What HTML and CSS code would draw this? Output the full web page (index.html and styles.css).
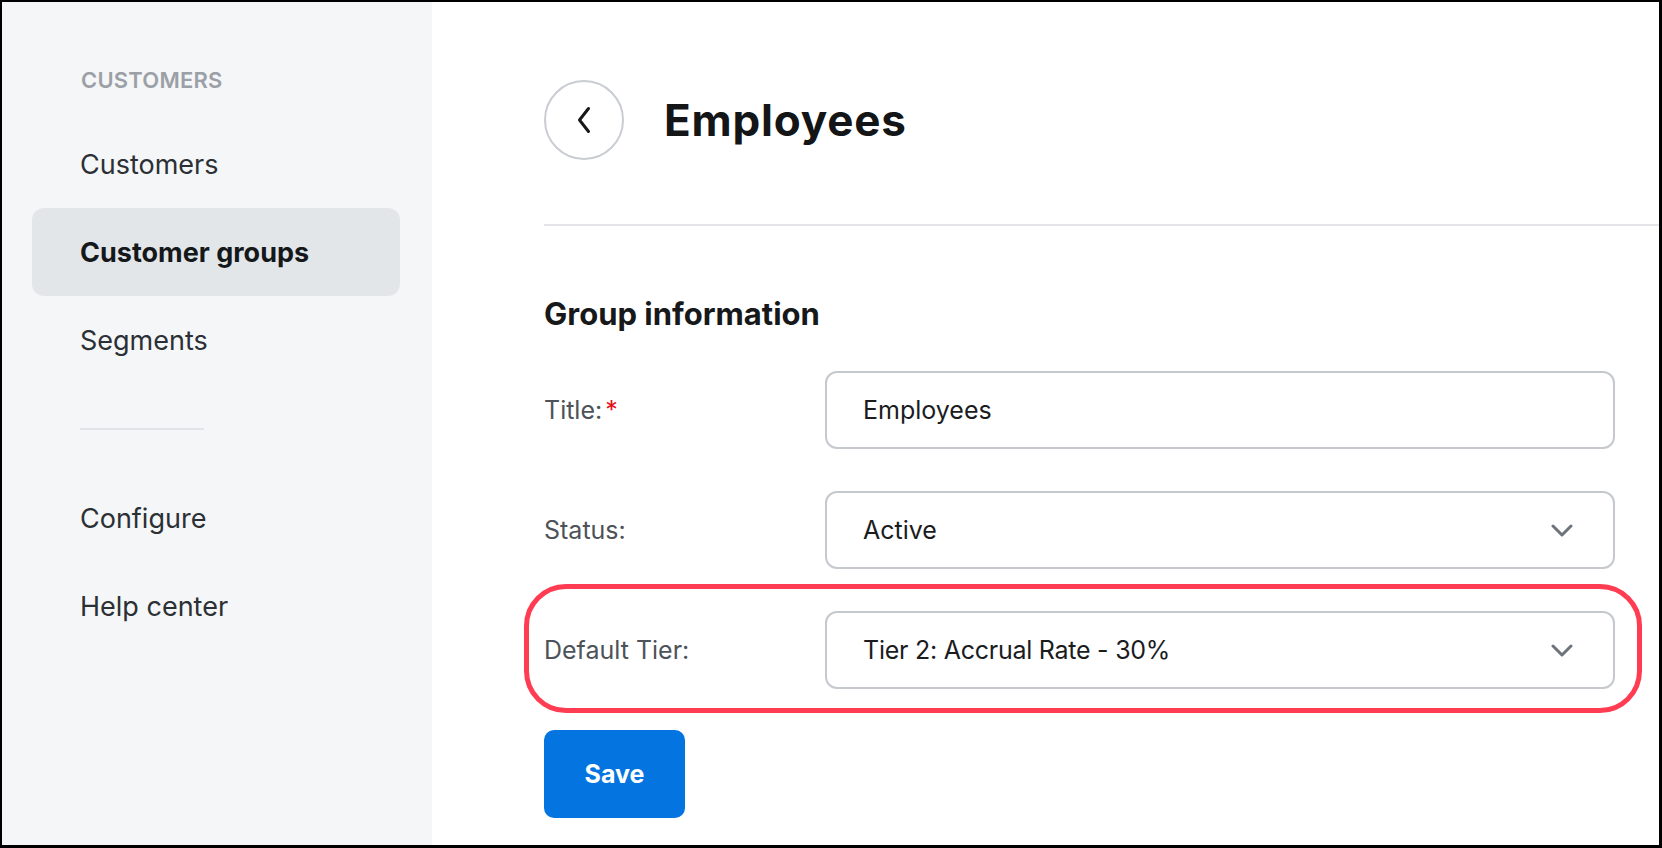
FILE: index.html
```html
<html>
  <head>
    <title>Employees - Customer groups</title>
    <link rel="stylesheet" href="styles.css">
  </head>
  <body>
    <div class="frame">
      <aside class="sidebar">
        <div class="sidebar-heading">Customers</div>
        <nav class="nav">
          <a class="nav-item" href="#">Customers</a>
          <a class="nav-item active" href="#">Customer groups</a>
          <a class="nav-item" href="#">Segments</a>
          <hr class="nav-divider">
          <a class="nav-item" href="#">Configure</a>
          <a class="nav-item" href="#">Help center</a>
        </nav>
      </aside>

      <main class="main">
        <header class="page-header">
          <button class="back-btn" aria-label="Back">
            <svg width="16" height="28" viewBox="0 0 16 28">
              <path d="M12.5 2.5 L3.5 14 L12.5 25.5" fill="none" stroke="#16181a" stroke-width="3" stroke-linecap="round" stroke-linejoin="round"/>
            </svg>
          </button>
          <h1 class="page-title">Employees</h1>
        </header>

        <hr class="page-rule">

        <section class="group-form">
          <h2 class="section-title">Group information</h2>

          <div class="field">
            <label class="field-label" for="title">Title:<span class="required">*</span></label>
            <input class="text-input" id="title" type="text" value="Employees">
          </div>

          <div class="field">
            <label class="field-label">Status:</label>
            <div class="select">
              <span>Active</span>
              <svg width="22" height="13" viewBox="0 0 22 13">
                <path d="M2 2 L11 11 L20 2" fill="none" stroke="#6c737a" stroke-width="3" stroke-linecap="round" stroke-linejoin="round"/>
              </svg>
            </div>
          </div>

          <div class="field highlight">
            <label class="field-label">Default Tier:</label>
            <div class="select">
              <span class="tier-value">Tier 2: Accrual Rate - 30%</span>
              <svg width="22" height="13" viewBox="0 0 22 13">
                <path d="M2 2 L11 11 L20 2" fill="none" stroke="#6c737a" stroke-width="3" stroke-linecap="round" stroke-linejoin="round"/>
              </svg>
            </div>
          </div>

          <button class="save-btn">Save</button>
        </section>
      </main>
    </div>
  </body>
</html>
```

FILE: styles.css
```css
html,
body {
  margin: 0;
  padding: 0;
  background: #fff;
  font-family: Inter, "Noto Sans", sans-serif;
}

.frame {
  display: flex;
  width: 1662px;
  height: 848px;
  box-sizing: border-box;
  border-style: solid;
  border-color: #000;
  border-width: 2px 3px 3px 2px;
  overflow: hidden;
}

/* sidebar */

.sidebar {
  width: 430px;
  flex-shrink: 0;
  background-color: #f5f6f8;
  padding: 63px 32px 0 30px;
  box-sizing: border-box;
}

.sidebar-heading {
  padding-left: 49px;
  font-size: 22px;
  line-height: 30px;
  font-weight: 600;
  letter-spacing: 0.2px;
  text-transform: uppercase;
  color: #9ba0a6;
  margin-bottom: 25px;
}

.nav {
  display: flex;
  flex-direction: column;
}

.nav-item {
  display: flex;
  align-items: center;
  height: 88px;
  padding-left: 48px;
  border-radius: 12px;
  font-size: 27px;
  color: #2b3034;
  text-decoration: none;
}

.nav-item.active {
  background-color: #e3e6e9;
  font-weight: 700;
  color: #15181a;
}

.nav-divider {
  width: 124px;
  height: 2px;
  margin: 44px 0 44px 48px;
  border: none;
  background-color: #e2e4e7;
}

/* main */

.main {
  flex: 1;
  padding: 78px 0 0 112px;
  box-sizing: border-box;
}

.page-header {
  display: flex;
  align-items: center;
  gap: 40px;
}

.back-btn {
  width: 80px;
  height: 80px;
  border: 2px solid #c9cdd1;
  border-radius: 50%;
  background: #fff;
  display: flex;
  align-items: center;
  justify-content: center;
  padding: 0;
}

.page-title {
  margin: 0;
  font-size: 44px;
  font-weight: 700;
  letter-spacing: 0.8px;
  color: #131517;
}

.page-rule {
  height: 2px;
  margin: 64px 0 70px 0;
  border: none;
  background-color: #e3e5e8;
}

.group-form {
  margin-right: 44px;
}

.section-title {
  margin: 0 0 39px 0;
  font-size: 31px;
  line-height: 36px;
  font-weight: 700;
  color: #16181a;
}

.field {
  display: flex;
  align-items: center;
  margin-bottom: 42px;
}

.field-label {
  width: 281px;
  flex-shrink: 0;
  font-size: 25px;
  color: #4d5359;
}

.required {
  color: #e8101c;
  margin-left: 3px;
}

.text-input,
.select {
  flex: 1;
  height: 78px;
  box-sizing: border-box;
  border: 2px solid #c5c9ce;
  border-radius: 12px;
  padding: 0 40px 0 36px;
  font-family: Inter, "Noto Sans", sans-serif;
  font-size: 25px;
  color: #1a1c1e;
  background: #fff;
}

.select {
  display: flex;
  align-items: center;
  justify-content: space-between;
}

.tier-value {
  letter-spacing: -0.25px;
}

.field.highlight {
  position: relative;
  margin-bottom: 41px;
}

.field.highlight::after {
  content: "";
  position: absolute;
  top: -27px;
  bottom: -24px;
  left: -20px;
  right: -27px;
  border: 5px solid #ff3c52;
  border-radius: 42px;
  pointer-events: none;
}

.save-btn {
  width: 141px;
  height: 88px;
  border: none;
  border-radius: 10px;
  background-color: #0475e0;
  color: #fff;
  font-family: Inter, "Noto Sans", sans-serif;
  font-size: 25px;
  font-weight: 700;
}
```
